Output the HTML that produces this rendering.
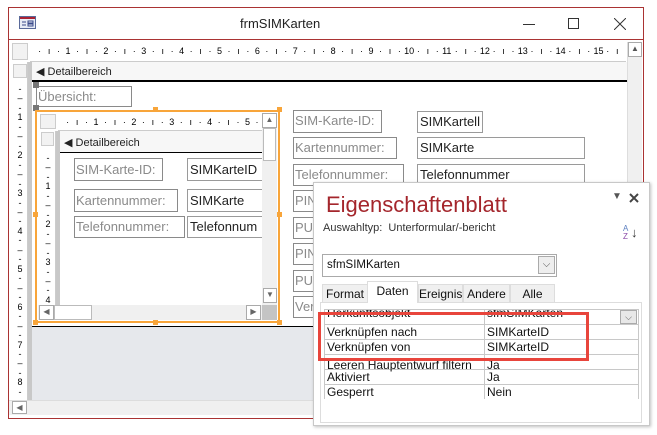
<!DOCTYPE html>
<html><head><meta charset="utf-8"><style>
*{margin:0;padding:0;box-sizing:border-box}
body{width:657px;height:435px;background:#fff;position:relative;overflow:hidden;font-family:"Liberation Sans",sans-serif}
.a{position:absolute}
.lb{position:absolute;border:1px solid #8a8a8a;background:#fff;color:#8a8a8a;font-size:13px;line-height:20px;padding-left:1px;white-space:nowrap;overflow:hidden}
.tb{position:absolute;border:1px solid #9a9a9a;background:#fff;color:#222;font-size:13px;line-height:20px;padding-left:2px;white-space:nowrap;overflow:hidden}
.hr{position:absolute;display:flex;font-size:9px;line-height:12px;color:#000}
.hr span{width:9.475px;flex:none;text-align:center}
.vr{position:absolute;display:flex;flex-direction:column;font-size:9px;color:#000}
.vr span{height:9.475px;line-height:9.475px;flex:none;text-align:center;width:10px}
.clip{position:absolute;overflow:hidden}
.row{position:absolute;left:0;width:314px;height:15px;border-bottom:1px solid #c8c8c8;font-size:12px;line-height:14px;color:#111}
.row span{position:absolute;top:0}
</style></head><body>
<div class="a" style="left:8px;top:7px;width:636px;height:412px;border:1px solid #a33;background:#fff"></div>
<div class="a" style="left:9px;top:39px;width:634px;height:1px;background:#a33"></div>
<svg class="a" style="left:19px;top:16px" width="17" height="13"><rect x="0.5" y="0.5" width="16" height="12" fill="#e8ecf6" stroke="#5a6a9a"/><rect x="1" y="1" width="15" height="2" fill="#a23"/><path d="M3 6h4M3 9h4M9 5h5v2h-5zM9 8h5v2h-5z" stroke="#3a4a8a" fill="none"/></svg>
<div class="a" style="left:240px;top:16px;font-size:13px;color:#222">frmSIMKarten</div>
<div class="a" style="left:523px;top:24px;width:12px;height:1px;background:#333"></div>
<div class="a" style="left:568px;top:18px;width:11px;height:11px;border:1px solid #333"></div>
<svg class="a" style="left:614px;top:18px" width="12" height="12"><path d="M0 0L12 12M12 0L0 12" stroke="#333"/></svg>
<!-- ruler -->
<div class="a" style="left:12px;top:43px;width:16px;height:17px;border:1px solid #ccc;background:#f2f2f2"></div>
<div class="a" style="left:30px;top:42px;width:596px;height:20px;background:#fff;border-bottom:1px solid #ccc"></div>
<div class="clip" style="left:30px;top:45px;width:596px;height:14px">
<div class="hr" style="left:-4.6px;top:0"><span></span><span>·</span><span>ı</span><span>·</span><span>1</span><span>·</span><span>ı</span><span>·</span><span>2</span><span>·</span><span>ı</span><span>·</span><span>3</span><span>·</span><span>ı</span><span>·</span><span>4</span><span>·</span><span>ı</span><span>·</span><span>5</span><span>·</span><span>ı</span><span>·</span><span>6</span><span>·</span><span>ı</span><span>·</span><span>7</span><span>·</span><span>ı</span><span>·</span><span>8</span><span>·</span><span>ı</span><span>·</span><span>9</span><span>·</span><span>ı</span><span>·</span><span>10</span><span>·</span><span>ı</span><span>·</span><span>11</span><span>·</span><span>ı</span><span>·</span><span>12</span><span>·</span><span>ı</span><span>·</span><span>13</span><span>·</span><span>ı</span><span>·</span><span>14</span><span>·</span><span>ı</span><span>·</span><span>15</span><span>·</span><span>ı</span><span>·</span></div></div>
<div class="a" style="left:627px;top:42px;width:15px;height:358px;background:#f0f0f0;border-left:1px solid #ddd"></div>
<div class="a" style="left:628px;top:42px;width:14px;height:15px;border:1px solid #aaa;background:#fff;font-size:8px;text-align:center;line-height:12px;color:#555">▲</div>
<!-- vertical ruler -->
<div class="a" style="left:12px;top:62px;width:16px;height:338px;background:#fff;border-right:1px solid #ccc"></div>
<div class="a" style="left:13px;top:64px;width:14px;height:14px;border:1px solid #ccc;background:#f2f2f2"></div>
<div class="clip" style="left:15px;top:82px;width:12px;height:318px">
<div class="vr" style="left:0;top:-6.6px"><span></span><span>-</span><span>–</span><span>-</span><span>1</span><span>-</span><span>–</span><span>-</span><span>2</span><span>-</span><span>–</span><span>-</span><span>3</span><span>-</span><span>–</span><span>-</span><span>4</span><span>-</span><span>–</span><span>-</span><span>5</span><span>-</span><span>–</span><span>-</span><span>6</span><span>-</span><span>–</span><span>-</span><span>7</span><span>-</span><span>–</span><span>-</span><span>8</span><span>-</span><span>–</span></div></div>
<div class="a" style="left:28px;top:62px;width:4px;height:338px;background:#c8c8c8"></div>
<div class="a" style="left:32px;top:62px;width:595px;height:19px;background:#f7f7f7"></div>
<div class="a" style="left:36px;top:65px;font-size:11px;color:#222">&#x25C0;&#xFE0E; Detailbereich</div>
<div class="a" style="left:32px;top:80px;width:595px;height:2px;background:#000"></div>
<div class="a" style="left:32px;top:326px;width:595px;height:1px;background:#000"></div>
<div class="a" style="left:32px;top:327px;width:595px;height:73px;background:#e6e8ec"></div>
<div class="a" style="left:9px;top:400px;width:634px;height:15px;background:#f0f0f0;border-top:1px solid #ddd"></div>
<div class="a" style="left:12px;top:401px;width:15px;height:13px;border:1px solid #aaa;background:#fff;font-size:8px;line-height:11px;color:#666;text-align:center">◀</div>
<div class="lb" style="left:36px;top:86px;width:96px;height:21px;line-height:19px">Übersicht:</div>
<div class="a" style="left:33px;top:82px;width:6px;height:6px;background:#777"></div>
<div class="a" style="left:33px;top:105px;width:6px;height:6px;background:#777"></div>
<!-- subform -->
<div class="a" style="left:35px;top:110px;width:245px;height:213px;border:2px solid #f8a53a;background:#fff"></div>
<div class="a" style="left:153px;top:107px;width:5px;height:5px;background:#f8a53a"></div>
<div class="a" style="left:277px;top:107px;width:5px;height:5px;background:#f8a53a"></div>
<div class="a" style="left:33px;top:212px;width:5px;height:5px;background:#f8a53a"></div>
<div class="a" style="left:277px;top:212px;width:5px;height:5px;background:#f8a53a"></div>
<div class="a" style="left:153px;top:320px;width:5px;height:5px;background:#f8a53a"></div>
<div class="a" style="left:33px;top:320px;width:5px;height:5px;background:#f8a53a"></div>
<div class="a" style="left:277px;top:320px;width:5px;height:5px;background:#f8a53a"></div>
<div class="a" style="left:40px;top:114px;width:16px;height:15px;border:1px solid #ccc;background:#f2f2f2"></div>
<div class="a" style="left:58px;top:113px;width:204px;height:18px;border-bottom:1px solid #ccc"></div>
<div class="clip" style="left:58px;top:116px;width:204px;height:13px">
<div class="hr" style="left:-4.6px;top:0"><span></span><span>·</span><span>ı</span><span>·</span><span>1</span><span>·</span><span>ı</span><span>·</span><span>2</span><span>·</span><span>ı</span><span>·</span><span>3</span><span>·</span><span>ı</span><span>·</span><span>4</span><span>·</span><span>ı</span><span>·</span><span>5</span><span>·</span><span>ı</span><span>·</span></div></div>
<div class="a" style="left:262px;top:113px;width:15px;height:192px;background:#f0f0f0"></div>
<div class="a" style="left:262px;top:113px;width:15px;height:15px;border:1px solid #aaa;background:#fff;font-size:8px;line-height:12px;text-align:center;color:#666">▲</div>
<div class="a" style="left:263px;top:128px;width:13px;height:33px;border:1px solid #bbb;background:#fff"></div>
<div class="a" style="left:263px;top:288px;width:14px;height:15px;border:1px solid #aaa;background:#fff;font-size:8px;line-height:12px;text-align:center;color:#666">▼</div>
<div class="a" style="left:38px;top:305px;width:224px;height:15px;background:#f0f0f0"></div>
<div class="a" style="left:39px;top:305px;width:15px;height:15px;border:1px solid #aaa;background:#fff;font-size:8px;line-height:12px;text-align:center;color:#666">◀</div>
<div class="a" style="left:54px;top:305px;width:38px;height:15px;border:1px solid #bbb;background:#fff"></div>
<div class="a" style="left:246px;top:305px;width:15px;height:15px;border:1px solid #aaa;background:#fff;font-size:8px;line-height:12px;text-align:center;color:#666">▶</div>
<div class="a" style="left:262px;top:305px;width:15px;height:15px;background:#c4c4c4"></div>
<div class="a" style="left:40px;top:131px;width:16px;height:174px;border-right:1px solid #ccc"></div>
<div class="a" style="left:41px;top:132px;width:13px;height:14px;border:1px solid #ccc;background:#f2f2f2"></div>
<div class="clip" style="left:43px;top:150px;width:12px;height:155px">
<div class="vr" style="left:0;top:-5.6px"><span></span><span>-</span><span>–</span><span>-</span><span>1</span><span>-</span><span>–</span><span>-</span><span>2</span><span>-</span><span>–</span><span>-</span><span>3</span><span>-</span><span>–</span><span>-</span><span>4</span><span>-</span></div></div>
<div class="a" style="left:56px;top:131px;width:4px;height:174px;background:#c8c8c8"></div>
<div class="a" style="left:60px;top:131px;width:202px;height:21px;background:#f7f7f7"></div>
<div class="a" style="left:64px;top:136px;font-size:11px;color:#222">&#x25C0;&#xFE0E; Detailbereich</div>
<div class="a" style="left:60px;top:152px;width:202px;height:1px;background:#000"></div>
<div class="lb" style="left:74px;top:158px;width:89px;height:23px;line-height:21px">SIM-Karte-ID:</div>
<div class="tb" style="left:187px;top:158px;width:75px;height:23px;line-height:21px;border-right:none">SIMKarteID</div>
<div class="lb" style="left:74px;top:189px;width:104px;height:23px;line-height:21px">Kartennummer:</div>
<div class="tb" style="left:187px;top:189px;width:75px;height:23px;line-height:21px;border-right:none">SIMKarte</div>
<div class="lb" style="left:74px;top:216px;width:111px;height:22px;line-height:20px">Telefonnummer:</div>
<div class="tb" style="left:187px;top:216px;width:75px;height:22px;line-height:20px;border-right:none">Telefonnum</div>
<!-- right controls -->
<div class="lb" style="left:293px;top:110px;width:89px;height:23px">SIM-Karte-ID:</div>
<div class="tb" style="left:417px;top:111px;width:66px;height:22px">SIMKartell</div>
<div class="lb" style="left:293px;top:137px;width:104px;height:22px">Kartennummer:</div>
<div class="tb" style="left:417px;top:137px;width:168px;height:22px">SIMKarte</div>
<div class="lb" style="left:293px;top:164px;width:111px;height:22px">Telefonnummer:</div>
<div class="tb" style="left:417px;top:164px;width:168px;height:22px">Telefonnummer</div>
<div class="lb" style="left:293px;top:190px;width:40px;height:22px">PIN</div>
<div class="lb" style="left:293px;top:217px;width:40px;height:22px">PUK</div>
<div class="lb" style="left:293px;top:243px;width:40px;height:22px">PIN</div>
<div class="lb" style="left:293px;top:270px;width:40px;height:22px">PUK</div>
<div class="lb" style="left:293px;top:296px;width:40px;height:22px">Ver</div>
<!-- property sheet -->
<div class="a" style="left:313px;top:182px;width:337px;height:244px;background:#fff;border:1px solid #c8c8c8;box-shadow:1px 1px 3px rgba(0,0,0,.25)"></div>
<div class="a" style="left:326px;top:192px;font-size:22px;color:#a4262c">Eigenschaftenblatt</div>
<div class="a" style="left:612px;top:191px;font-size:10px;color:#555">▼</div>
<svg class="a" style="left:629px;top:193px" width="10" height="10"><path d="M1 1L9 9M9 1L1 9" stroke="#444" stroke-width="2"/></svg>
<div class="a" style="left:323px;top:222px;font-size:11px;color:#333">Auswahltyp:&nbsp; Unterformular/-bericht</div>
<div class="a" style="left:623px;top:225px;font-size:8px;line-height:8px;color:#5a7ec0">A<br><span style="color:#8a4aa8">Z</span></div>
<div class="a" style="left:631px;top:225px;font-size:13px;color:#333">↓</div>
<div class="a" style="left:322px;top:254px;width:235px;height:23px;border:1px solid #aaa;background:#fff;font-size:11.5px;line-height:20px;padding-left:4px;color:#111">sfmSIMKarten</div>
<div class="a" style="left:538px;top:256px;width:17px;height:18px;border:1px solid #aaa;background:#eee;font-size:10px;line-height:16px;text-align:center;color:#555">⌵</div>
<div class="a" style="left:320px;top:302px;width:322px;height:121px;border:1px solid #ddd;background:#fff"></div>
<div class="a" style="left:322px;top:284px;width:46px;height:19px;border:1px solid #ddd;background:#f0f0f0;font-size:12px;line-height:19px;text-align:center;color:#111">Format</div>
<div class="a" style="left:367px;top:281px;width:51px;height:22px;border:1px solid #ddd;border-bottom:none;background:#fff;font-size:12px;line-height:18px;text-align:center;color:#111">Daten</div>
<div class="a" style="left:418px;top:284px;width:45px;height:19px;border:1px solid #ddd;background:#f0f0f0;font-size:12px;line-height:19px;text-align:center;color:#111">Ereignis</div>
<div class="a" style="left:463px;top:284px;width:47px;height:19px;border:1px solid #ddd;background:#f0f0f0;font-size:12px;line-height:19px;text-align:center;color:#111">Andere</div>
<div class="a" style="left:510px;top:284px;width:45px;height:19px;border:1px solid #ddd;background:#f0f0f0;font-size:12px;line-height:19px;text-align:center;color:#111">Alle</div>
<div class="a" style="left:324px;top:309px;width:315px;height:90px;border:1px solid #c8c8c8;border-bottom:none;overflow:hidden">
<div class="a" style="left:159px;top:0;width:1px;height:90px;background:#c8c8c8"></div>
<div class="row" style="top:0"><span style="left:2px;top:-4px">Herkunftsobjekt</span><span style="left:162px;top:-4px">sfmSIMKarten</span></div>
<div class="row" style="top:15px"><span style="left:2px">Verknüpfen nach</span><span style="left:162px">SIMKarteID</span></div>
<div class="row" style="top:30px"><span style="left:2px">Verknüpfen von</span><span style="left:162px">SIMKarteID</span></div>
<div class="row" style="top:45px"><span style="left:2px;top:3px">Leeren Hauptentwurf filtern</span><span style="left:162px;top:3px">Ja</span></div>
<div class="row" style="top:60px"><span style="left:2px">Aktiviert</span><span style="left:162px">Ja</span></div>
<div class="row" style="top:75px"><span style="left:2px">Gesperrt</span><span style="left:162px">Nein</span></div>
</div>
<div class="a" style="left:620px;top:310px;width:17px;height:14px;border:1px solid #aaa;background:#e8e8e8;font-size:9px;line-height:12px;text-align:center;color:#555">⌵</div>
<div class="a" style="left:318px;top:312px;width:271px;height:49px;border:3px solid #e8453c"></div>
</body></html>
